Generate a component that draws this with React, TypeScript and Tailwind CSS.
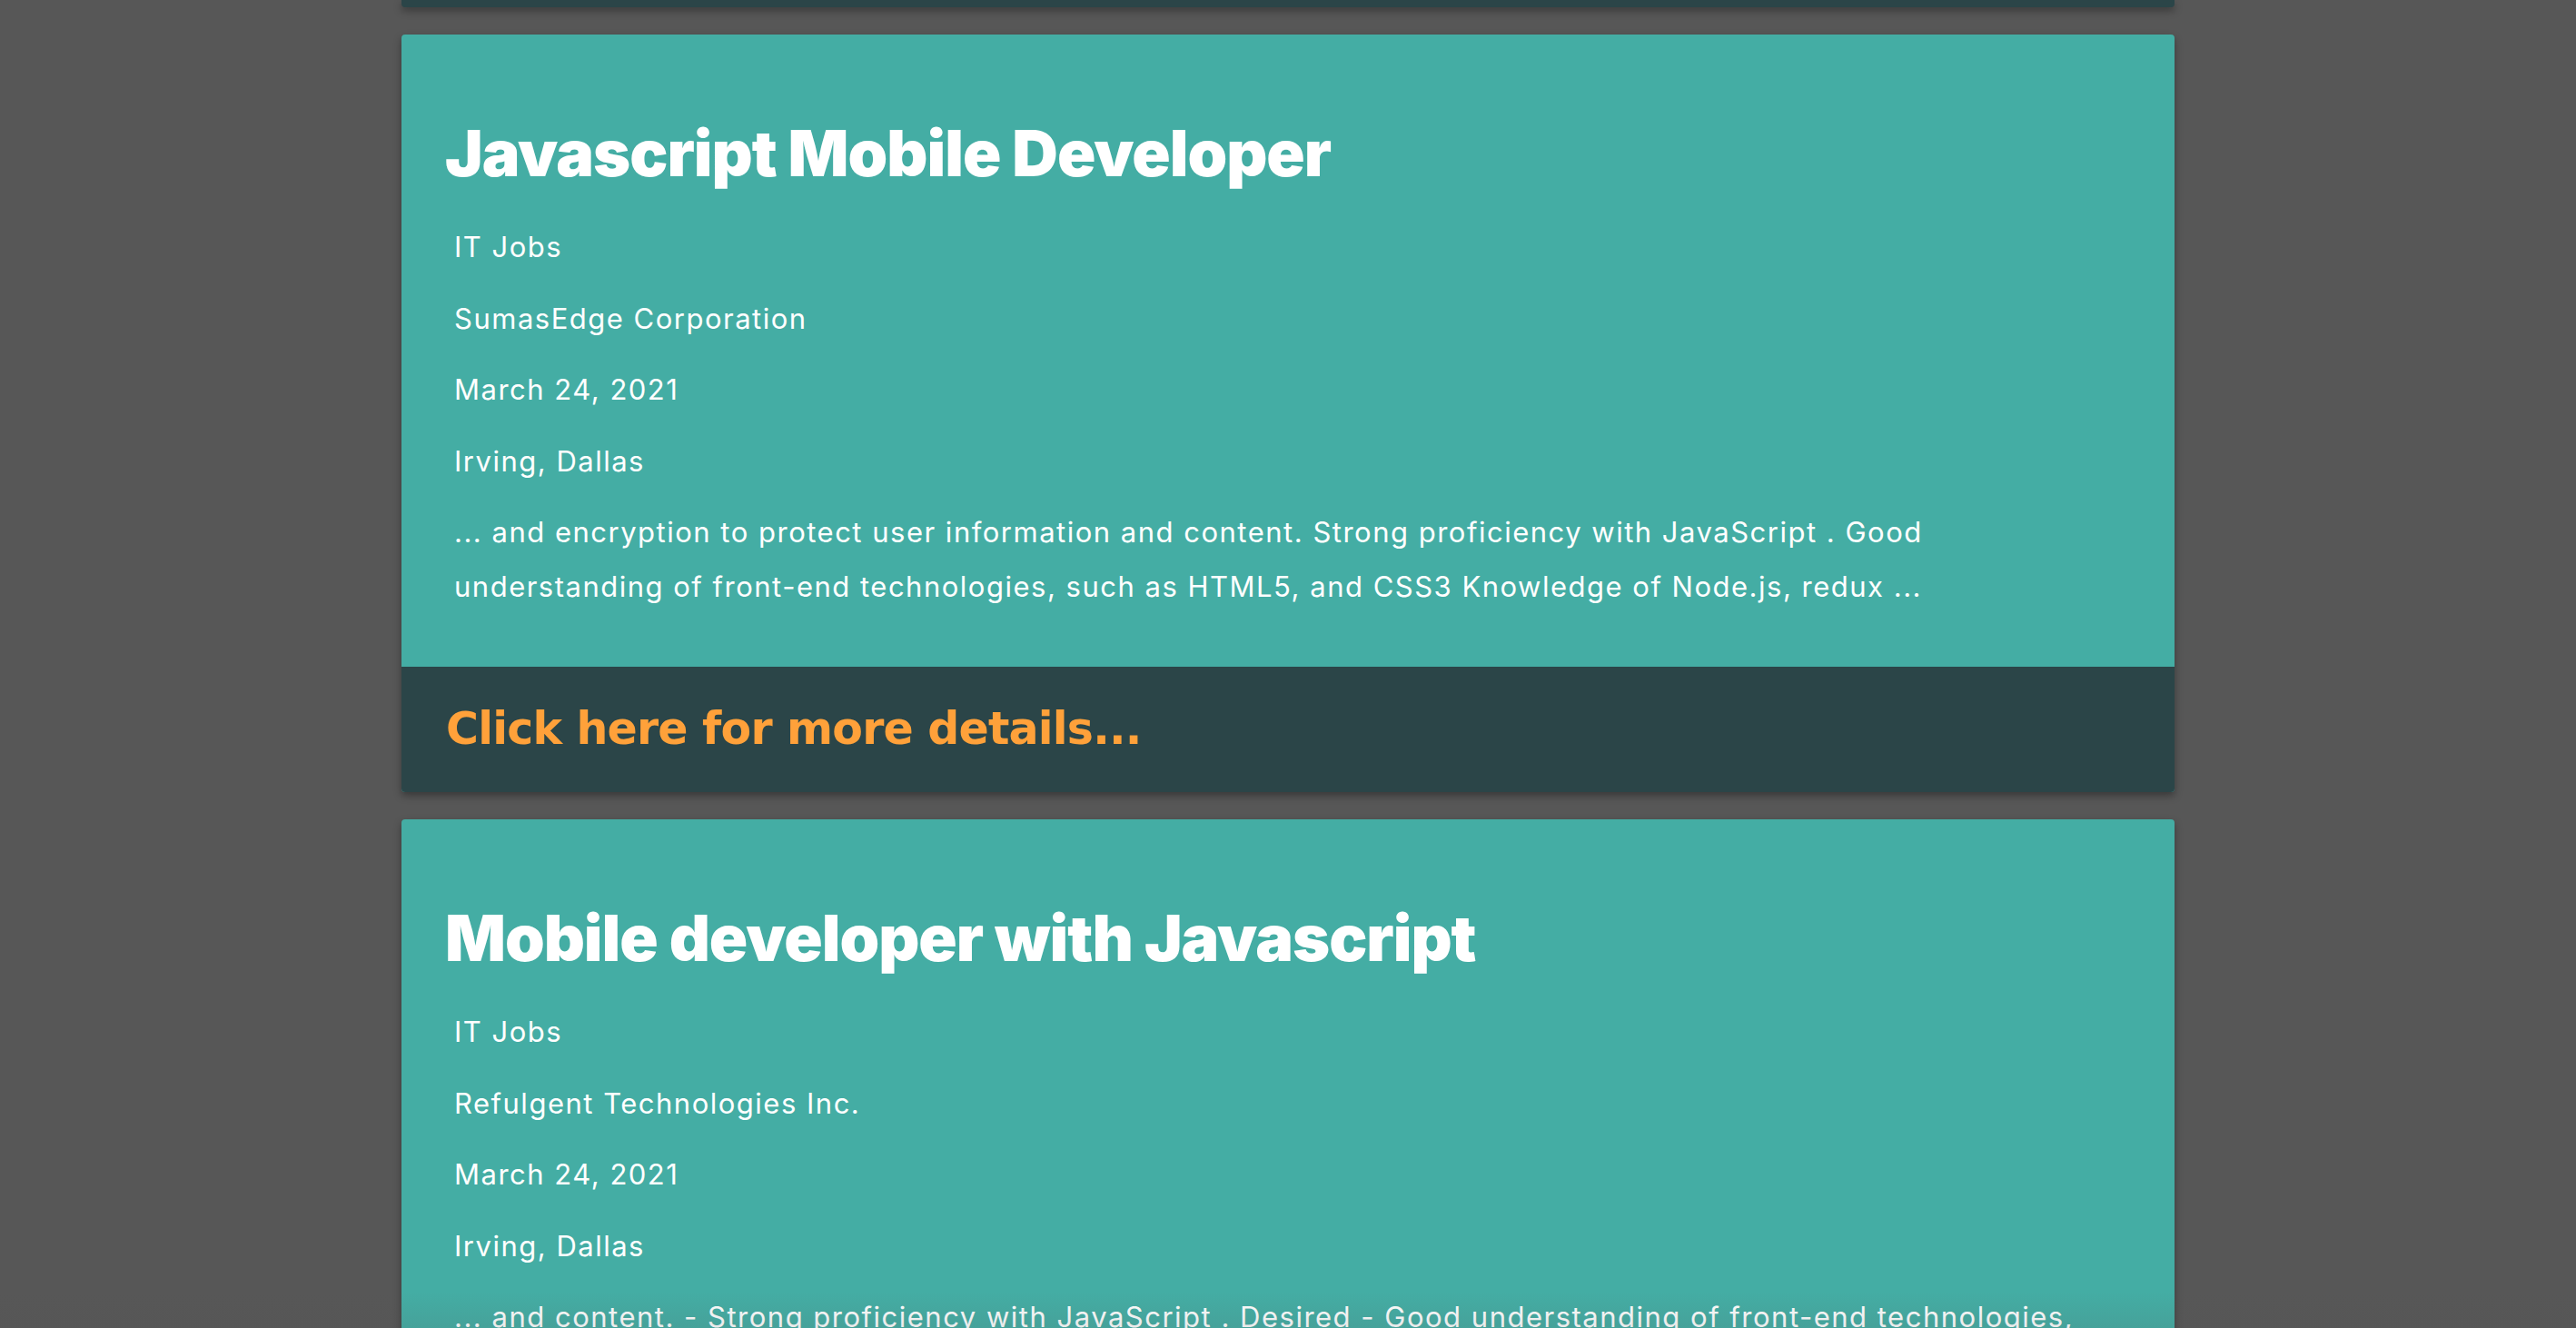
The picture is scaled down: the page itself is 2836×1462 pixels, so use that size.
import React from "react";

// Job listing feed: teal cards with a dark "more details" footer.

type Job = {
  title: string;
  category: string;
  company: string;
  date: string;
  location: string;
  snippet: string;
};

const JOBS: Job[] = [
  {
    title: "Javascript Mobile Developer",
    category: "IT Jobs",
    company: "SumasEdge Corporation",
    date: "March 24, 2021",
    location: "Irving, Dallas",
    snippet:
      "... and encryption to protect user information and content. Strong proficiency with JavaScript . Good understanding of front-end technologies, such as HTML5, and CSS3 Knowledge of Node.js, redux ...",
  },
  {
    title: "Mobile developer with Javascript",
    category: "IT Jobs",
    company: "Refulgent Technologies Inc.",
    date: "March 24, 2021",
    location: "Irving, Dallas",
    snippet:
      "... and content. - Strong proficiency with JavaScript . Desired - Good understanding of front-end technologies, such as HTML5, and CSS3 - Knowledge of Node.js ...",
  },
];

function JobCard({ job }: { job: Job }) {
  return (
    <article className="overflow-hidden rounded-[4px] bg-[#44ada4] shadow-[0_4px_8px_rgba(0,0,0,0.35)]">
      <div className="px-[48px] pb-[58px] pt-[88px]">
        <h2 className="font-['Inter',sans-serif] text-[70px] font-black leading-[normal] tracking-[-1px] text-white">
          {job.title}
        </h2>
        <div className="mt-[31px] flex flex-col gap-[18.5px] pl-[10px] font-['Inter',sans-serif] text-[31px] leading-[60px] tracking-[1.5px] text-white">
          <p>{job.category}</p>
          <p>{job.company}</p>
          <p>{job.date}</p>
          <p>{job.location}</p>
          <p>{job.snippet}</p>
        </div>
      </div>
      <div className="flex h-[138px] items-center bg-[#2b4548] px-[49px]">
        <a className="font-['DejaVu_Sans',sans-serif] text-[49px] font-bold tracking-[-0.8px] text-[#ffa13a]">
          Click here for more details...
        </a>
      </div>
    </article>
  );
}

export default function App() {
  return (
    <div className="relative h-[1462px] overflow-hidden bg-[#575757]">
      <div className="mx-auto flex w-[1952px] flex-col gap-[30px]">
        {/* tail of the previous card, scrolled mostly out of view */}
        <div className="h-[8px] rounded-b-[4px] bg-[#2b4548] shadow-[0_4px_8px_rgba(0,0,0,0.35)]" />
        {JOBS.map((job) => (
          <JobCard key={job.title} job={job} />
        ))}
      </div>
      <div className="pointer-events-none absolute inset-x-0 bottom-0 h-[40px] bg-gradient-to-b from-transparent to-[rgba(80,80,80,0.12)]" />
    </div>
  );
}
